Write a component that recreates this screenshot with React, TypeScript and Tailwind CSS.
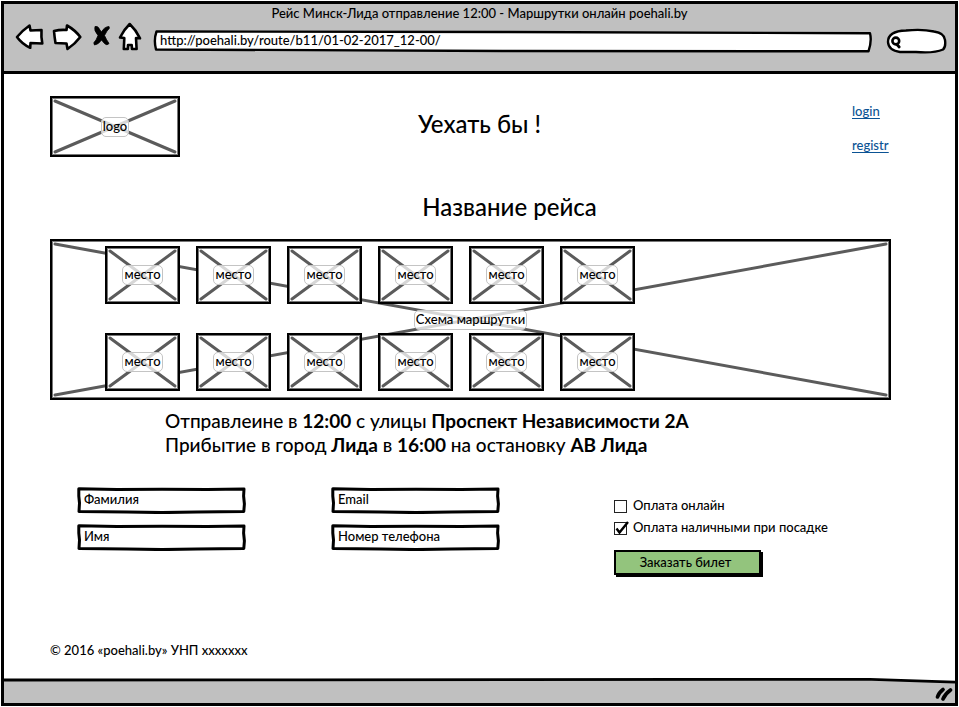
import type { ReactNode } from "react";

function Cross() {
  return (
    <svg className="absolute inset-[3px] h-[calc(100%-6px)] w-[calc(100%-6px)] overflow-visible" aria-hidden="true">
      <g stroke="#5b5b5b" strokeWidth="3" strokeLinecap="round">
        <line x1="0" y1="0" x2="100%" y2="100%" />
        <line x1="0" y1="100%" x2="100%" y2="0" />
      </g>
    </svg>
  );
}

function Tag({ children }: { children: ReactNode }) {
  return (
    <span className="relative flex h-5 items-center whitespace-nowrap rounded-[5px] border border-[#c4c4c4] bg-white/75 px-px pb-0.5 text-[13px] leading-4">
      {children}
    </span>
  );
}

function Placeholder({ label, size }: { label: string; size: string }) {
  return (
    <div
      className={`relative flex items-center justify-center border-2 border-black bg-white shadow-[inset_0_0_0_1px_#777] ${size}`}
    >
      <Cross />
      <Tag>{label}</Tag>
    </div>
  );
}

function Field({ label, type }: { label: string; type: string }) {
  return (
    <div className="relative h-[27px] w-[169px]">
      <svg
        className="absolute inset-0 h-full w-full"
        viewBox="0 0 169 27"
        preserveAspectRatio="none"
        aria-hidden="true"
      >
        <path
          d="M1.8 1.8 L40 2.5 L85 2.2 L130 2.6 L167 2 L166.6 9 L167.4 17 L166.8 24.5 L120 25 L85 25.6 L50 25 L2 24.6 L2.5 16 L1.8 9 Z"
          fill="#fff"
          stroke="#000"
          strokeWidth="3"
          strokeLinejoin="round"
        />
      </svg>
      <input
        type={type}
        aria-label={label}
        placeholder={label}
        className="relative h-full w-full bg-transparent px-[7px] pb-1 text-[13px] font-medium outline-none placeholder:text-black placeholder:opacity-100"
      />
    </div>
  );
}

function Option({ label, checked }: { label: string; checked?: boolean }) {
  return (
    <label className="flex h-[22px] items-center gap-1.5 whitespace-nowrap">
      <span className="relative h-[13px] w-[13px]">
        <input
          type="checkbox"
          defaultChecked={checked}
          className="peer block h-[13px] w-[13px] appearance-none border border-[#222] bg-white"
        />
        <svg
          className="pointer-events-none absolute inset-0 hidden h-[13px] w-[13px] overflow-visible peer-checked:block"
          viewBox="0 0 13 13"
          aria-hidden="true"
        >
          <path d="M2.5 6.5 L5.5 10.5 L14 0" fill="none" stroke="#000" strokeWidth="2.4" />
        </svg>
      </span>
      <span className="pb-0.5">{label}</span>
    </label>
  );
}

const navIcon = "block h-8 fill-white stroke-black";

function Toolbar() {
  return (
    <div className="flex h-8 items-end pl-2 pr-2">
      <button type="button" aria-label="Назад" className="w-[37px]">
        <svg className={navIcon} width="37" height="32" viewBox="12 22 37 32" strokeWidth="2.6" strokeLinejoin="round">
          <path d="M17 37 Q23 30 29.5 25.5 L30.5 30.5 L41.5 30 Q41 37 42.3 43.5 L30.5 43 L30.2 47.8 Q22 44 17 37 Z" />
        </svg>
      </button>
      <button type="button" aria-label="Вперёд" className="w-[37px]">
        <svg className={navIcon} width="37" height="32" viewBox="49 22 37 32" strokeWidth="2.6" strokeLinejoin="round">
          <path d="M54 31 Q60 29.5 66.5 30 L67 25.5 Q75 30 80.3 37 Q75 44 67.5 49 L66.5 43.5 L55.5 43 Q54.5 37 54 31 Z" />
        </svg>
      </button>
      <button type="button" aria-label="Остановить" className="w-[30px]">
        <svg className="block h-8" width="30" height="32" viewBox="86 22 30 32">
          <path
            d="M95 26.5 Q98 25.5 100 30 L101.5 32 Q104 27 109 26.5 Q110.5 28 107 31 L104.5 35.5 Q106.5 40 109 43.5 Q107 46 104.5 43.5 L101.5 40 Q98.5 44.5 94.5 45 Q92.5 43 96 40 L98 35.5 Q93.5 30 95 26.5 Z"
            fill="#000"
            stroke="#000"
            strokeWidth="0.8"
          />
        </svg>
      </button>
      <button type="button" aria-label="Домой" className="w-[30px]">
        <svg className={navIcon} width="30" height="32" viewBox="116 22 30 32" strokeWidth="2.6" strokeLinejoin="round">
          <path d="M129.7 24 Q124 29.5 120 37.5 L124.3 38 L123.8 49 L127.8 49 L128 45 L131.7 45 L132 49 L136.6 49 L136 38 L140 38.3 Q136 30 129.7 24 Z" />
        </svg>
      </button>
      <div className="relative mb-px ml-[7px] h-6 flex-1">
        <svg className="absolute inset-0 h-full w-full" viewBox="0 0 719 24" preserveAspectRatio="none" aria-hidden="true">
          <path
            d="M3.5 2.5 L350 3 L717 4.3 Q719 12 715.5 22.3 L350 22 L3 20.5 Q0.5 11 3.5 2.5 Z"
            fill="#fff"
            stroke="#000"
            strokeWidth="2.4"
            strokeLinejoin="round"
          />
        </svg>
        <input
          type="text"
          aria-label="Адрес"
          defaultValue="http://poehali.by/route/b11/01-02-2017_12-00/"
          className="relative h-full w-full bg-transparent px-[7px] pb-0.5 text-[13px] font-medium outline-none"
        />
      </div>
      <div className="relative ml-3.5 h-[26px] w-[61px]">
        <svg className="absolute inset-0 h-full w-full" viewBox="0 0 61 26" aria-hidden="true">
          <path
            d="M2 14 Q2 3 20 2.5 Q36 .8 48 3.5 Q58.5 5 59 12 Q60 19 57 21.5 Q48 25.5 30 24 L14 24 Q2.5 22.5 2 14 Z"
            fill="#fff"
            stroke="#000"
            strokeWidth="2.4"
          />
          <circle cx="9.8" cy="13" r="3.4" fill="none" stroke="#000" strokeWidth="2.6" />
          <path d="M11 16.5 L13.2 19" stroke="#000" strokeWidth="2.8" strokeLinecap="round" />
        </svg>
        <input type="search" aria-label="Поиск" className="relative h-full w-full bg-transparent pl-5 pr-2 text-[13px] outline-none" />
      </div>
    </div>
  );
}

const seats = Array.from({ length: 12 }, (_, i) => i + 1);

export default function App() {
  return (
    <div className="flex min-h-screen bg-white p-px font-['Lato','Noto_Sans',sans-serif] text-[13px] font-medium leading-5 text-black">
      <div className="flex flex-1 flex-col border-[3px] border-black">
        <header className="border-b-[3px] border-black bg-[#c0c0c0] pb-[17px]">
          <p className="text-center leading-[18px]">Рейс Минск-Лида отправление 12:00 - Маршрутки онлайн poehali.by</p>
          <Toolbar />
        </header>

        <main className="flex-1 pl-[46px] pr-16 pt-[22px]">
          <div className="grid grid-cols-[130px_1fr_130px] items-start">
            <Placeholder label="logo" size="h-[61px]" />
            <h1 className="pl-[18px] pt-3 text-center text-2xl leading-8">Уехать бы !</h1>
            <nav className="flex flex-col items-start gap-[18px] pl-[91px] pt-[7px] leading-4 text-[#0b5394] underline underline-offset-2">
              <a href="#login">login</a>
              <a href="#registr">registr</a>
            </nav>
          </div>

          <h2 className="mt-[34px] pl-[78px] text-center text-2xl leading-8">Название рейса</h2>

          <section className="relative mt-4 border-2 border-black pb-[7px] pl-[53px] pt-[5px] shadow-[inset_0_0_0_1px_#777]">
            <Cross />
            <div className="relative grid grid-cols-[repeat(6,75px)] gap-x-4 gap-y-[29px]">
              {seats.map((seat) => (
                <Placeholder key={seat} label="место" size="h-[58px]" />
              ))}
            </div>
            <div className="absolute inset-0 flex items-center justify-center">
              <Tag>Схема маршрутки</Tag>
            </div>
          </section>

          <p className="mt-[9px] pl-[115px] text-[19px] leading-6">
            Отправлеине в <b>12:00</b> с улицы <b>Проспект Независимости 2А</b>
            <br />
            Прибытие в город <b>Лида</b> в <b>16:00</b> на остановку <b>АВ Лида</b>
          </p>

          <form className="mt-[30px] flex pl-[27px]">
            <div className="grid grid-cols-[169px_169px] content-start gap-x-[85px] gap-y-2.5">
              <Field label="Фамилия" type="text" />
              <Field label="Email" type="email" />
              <Field label="Имя" type="text" />
              <Field label="Номер телефона" type="tel" />
            </div>
            <div className="ml-[114px] pt-2">
              <Option label="Оплата онлайн" />
              <Option label="Оплата наличными при посадке" checked />
              <button
                type="button"
                className="mt-[11px] block h-[25px] w-[147px] border-2 border-black bg-[#93c47d] pb-0.5 pr-1 leading-5 shadow-[2px_2px_0_#000]"
              >
                Заказать билет
              </button>
            </div>
          </form>

          <footer className="mt-[65px]">© 2016 «poehali.by» УНП xxxxxxx</footer>
        </main>

        <div className="relative h-[25px] bg-[#c0c0c0]">
          <svg className="absolute inset-0 h-full w-full" viewBox="0 0 951 25" preserveAspectRatio="none" aria-hidden="true">
            <path d="M0 0 H951 V4 L860 1.5 H0 Z" fill="#fff" />
            <path d="M0 2 L300 1.8 L860 1.2 L951 4.2" fill="none" stroke="#000" strokeWidth="2.8" />
          </svg>
          <svg className="absolute bottom-0.5 right-0.5" width="18" height="15" viewBox="0 0 18 15" aria-hidden="true">
            <path d="M2.5 11 Q3.5 7 8 3.5 M8 13 Q10 8 15.5 4" fill="none" stroke="#000" strokeWidth="3.6" strokeLinecap="round" />
          </svg>
        </div>
      </div>
    </div>
  );
}
